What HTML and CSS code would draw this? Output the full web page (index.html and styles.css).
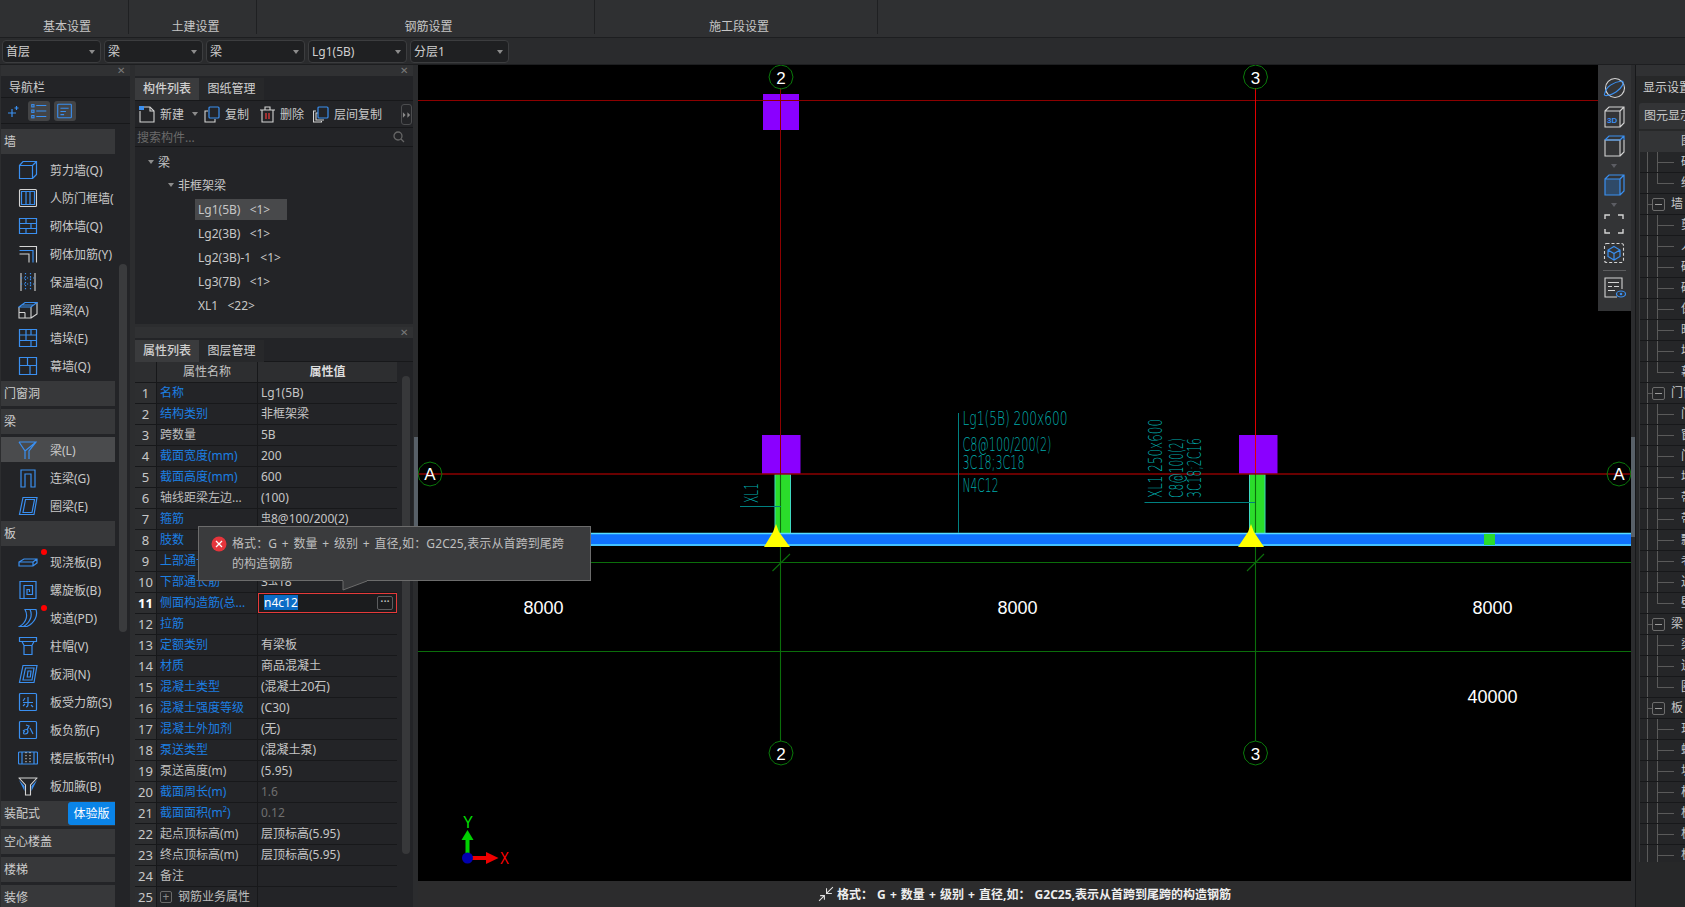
FILE: index.html
```html
<!DOCTYPE html>
<html lang="zh-CN">
<head>
<meta charset="utf-8">
<title>钢筋设置</title>
<link rel="stylesheet" href="styles.css">
</head>
<body>
<div class="app">
  <header class="menu">
    <div class="menu-cell c1"><span>基本设置</span></div>
    <div class="menu-cell c2"><span>土建设置</span></div>
    <div class="menu-cell c3"><span>钢筋设置</span></div>
    <div class="menu-cell c4"><span>施工段设置</span></div>
  </header>
  <div class="selbar">
    <div class="sel">首层</div>
    <div class="sel">梁</div>
    <div class="sel">梁</div>
    <div class="sel">Lg1(5B)</div>
    <div class="sel">分层1</div>
  </div>
  <main class="main">
    <!-- NAV -->
    <aside class="nav">
      <div class="closebar"><span class="x">✕</span></div>
      <div class="nav-title">导航栏</div>
      <div class="nav-tools">
        <svg class="ntool" width="21" height="22" viewBox="0 0 21 22"><path class="ib" d="M5 13h8M9 9v8M11.500 8h4M13.500 6v4"/></svg>
        <span class="ntbtn"><svg width="22" height="20" viewBox="0 0 22 22"><path class="ib" d="M8 5h11M8 11h11M8 17h11"/><rect class="ib" x="3" y="4" width="2.500" height="2.500"/><rect class="ib" x="3" y="10" width="2.500" height="2.500"/><rect class="ib" x="3" y="16" width="2.500" height="2.500"/></svg></span>
        <span class="ntbtn"><svg width="22" height="20" viewBox="0 0 22 22"><rect class="ib" x="3" y="3.500" width="15" height="15" rx="1"/><path class="ib" d="M6 8h9M6 11.500h6M6 15h4"/></svg></span>
      </div>
      <div class="nav-body">
        <div class="nav-list">
          <div class="nh first">墙</div>
          <div class="ni"><svg width="20" height="20" viewBox="0 0 20 20"><path class="ib" d="M1.500 5.500h13v13h-13zM1.500 5.500l3.500-4h13.500v13l-4 4M14.500 5.500l4-4"/></svg><span>剪力墙(Q)</span></div>
          <div class="ni"><svg width="20" height="20" viewBox="0 0 20 20"><rect class="iw" x="1.500" y="1.500" width="17" height="17" rx="1"/><path class="ib" d="M3.500 3.500h13v13h-13zM8 3.500v13M12 3.500v13"/></svg><span>人防门框墙(</span></div>
          <div class="ni"><svg width="20" height="20" viewBox="0 0 20 20"><path class="ib" d="M1.500 2.500h17v15h-17zM1.500 7.500h17M1.500 12.500h17M8 2.500v5M13 7.500v5M8 12.500v5"/></svg><span>砌体墙(Q)</span></div>
          <div class="ni"><svg width="20" height="20" viewBox="0 0 20 20"><path class="iw" d="M1.500 2.500H18.500v16M1.500 10H11v8.500"/><path class="ib" d="M1.500 6.500H15v12"/></svg><span>砌体加筋(Y)</span></div>
          <div class="ni"><svg width="20" height="20" viewBox="0 0 20 20"><path class="iw" d="M3 1v18M17 1v18"/><path class="ib dot" d="M7.500 1v18M12.500 1v18M3 6h14M3 12h14"/></svg><span>保温墙(Q)</span></div>
          <div class="ni"><svg width="20" height="20" viewBox="0 0 20 20"><path class="iw" d="M1 7v11h12V7M13 18l6-4V3M1 12.500h6M7 12.500V18"/><path class="ib" d="M1 7l6-4.500h12L13 7zM1 7h12M4 5h12"/></svg><span>暗梁(A)</span></div>
          <div class="ni"><svg width="20" height="20" viewBox="0 0 20 20"><path class="ib" d="M1.500 1.500h17v17h-17zM1.500 7h17M1.500 12.500h17M8 1.500V7M13 1.500V7M8 7v5.500M13 12.500v6"/></svg><span>墙垛(E)</span></div>
          <div class="ni"><svg width="20" height="20" viewBox="0 0 20 20"><path class="ib" d="M1.500 1.500h17v17h-17zM1.500 9.500h17M9.500 1.500v8M12 9.500v9"/></svg><span>幕墙(Q)</span></div>
          <div class="nh">门窗洞</div>
          <div class="nh">梁</div>
          <div class="ni sel-item"><svg width="20" height="20" viewBox="0 0 20 20"><path class="ib" d="M1 2h17L11 11v8M1 2l6 9v8M18 2L7 11"/></svg><span>梁(L)</span></div>
          <div class="ni"><svg width="20" height="20" viewBox="0 0 20 20"><path class="ib" d="M3 19V2h14v17h-4V6H7v13z"/></svg><span>连梁(G)</span></div>
          <div class="ni"><svg width="20" height="20" viewBox="0 0 20 20"><path class="ib" d="M5 1.500h14L16 18.500H1.500zM7.500 3.500h9L14 16.500H5z"/></svg><span>圈梁(E)</span></div>
          <div class="nh">板</div>
          <div class="ni"><i class="dot-red"></i><svg width="20" height="20" viewBox="0 0 20 20"><path class="ib" d="M1 10l5-3h13v4l-4 3H1zM1 10h14v4M15 10l4-3"/></svg><span>现浇板(B)</span></div>
          <div class="ni"><svg width="20" height="20" viewBox="0 0 20 20"><path class="ib" d="M2 1.500h16v17H2zM6 18V5.500h8.500v9H9v-5h2.500v2.500"/></svg><span>螺旋板(B)</span></div>
          <div class="ni"><i class="dot-red"></i><svg width="20" height="20" viewBox="0 0 20 20"><path class="ib" d="M7 1.500h11c2 6-1 13-9 17H1.500C9 14 10 7 7 1.500zM12 1.500c3 6 0 13-6.500 17"/></svg><span>坡道(PD)</span></div>
          <div class="ni"><svg width="20" height="20" viewBox="0 0 20 20"><path class="ib" d="M1.500 1.500h17v4h-17zM4 5.500l2 4h8l2-4M6 9.500v9h8v-9"/></svg><span>柱帽(V)</span></div>
          <div class="ni"><svg width="20" height="20" viewBox="0 0 20 20"><path class="ib" d="M5 1.500h14L16 18.500H1.500zM7.500 4h8.500L14 16H5zM10 7h3l-.7 6H9.200z"/></svg><span>板洞(N)</span></div>
          <div class="ni"><svg width="20" height="20" viewBox="0 0 20 20"><rect class="ib" x="1.500" y="1.500" width="17" height="17" rx="1"/><path class="ib" d="M5 10.500h10M10 5v7c0 2-1 3-2 3M7 6l-2 3M13 13l2 2M7 12l-2 2"/></svg><span>板受力筋(S)</span></div>
          <div class="ni"><svg width="20" height="20" viewBox="0 0 20 20"><rect class="ib" x="1.500" y="1.500" width="17" height="17" rx="1"/><path class="ib" d="M8 5l3 1-2 4M5 11c2-2 5-2 5 0s-1 3-3 3-2-2 0-3M12 8l3 6"/></svg><span>板负筋(F)</span></div>
          <div class="ni"><svg width="20" height="20" viewBox="0 0 20 20"><rect class="ib" x=".5" y="4" width="19" height="12" rx="1"/><path class="ib" d="M4 4v12M16 4v12"/><path class="iw dot" d="M8 4v12M12 4v12"/></svg><span>楼层板带(H)</span></div>
          <div class="ni"><svg width="20" height="20" viewBox="0 0 20 20"><path class="iw" d="M.5 2h19M1 2l6.500 7v10h5V9L19 2"/><path class="ibf" d="M1 4l5.500 6v5zM19 4l-5.500 6v5z"/></svg><span>板加腋(B)</span></div>
          <div class="nh trial"><span>装配式</span><b class="badge">体验版</b></div>
          <div class="nh">空心楼盖</div>
          <div class="nh">楼梯</div>
          <div class="nh">装修</div>
        </div>
        <div class="nav-track"><div class="nav-thumb"></div></div>
      </div>
    </aside>

    <!-- MIDDLE -->
    <section class="mid">
      <div class="panel top-panel">
        <div class="closebar"><span class="x">✕</span></div>
        <div class="tabs t-list"><span class="tab on">构件列表</span><span class="tab">图纸管理</span></div>
        <div class="tools">
          <span class="tool"><svg width="16" height="17" viewBox="0 0 16 17"><path class="iw" d="M1 5v11h14V5l-4-4H5"/><path class="iw" d="M11 1v4h4"/><rect class="ibf" x="0" y="0" width="5" height="4"/></svg>新建<i class="caret"></i></span>
          <span class="tool t2"><svg width="16" height="17" viewBox="0 0 16 17"><path class="iw" d="M4 5H1v11h10v-3"/><rect class="ib" x="5" y="1" width="10" height="11" rx="1"/></svg>复制</span>
          <span class="tool t3"><svg width="15" height="17" viewBox="0 0 15 17"><path class="iw" d="M0 4h15M5 4V1h5v3M2 4v12h11V4"/><path class="ir" d="M6 7v6M9 7v6"/></svg>删除</span>
          <span class="tool t4"><svg width="16" height="17" viewBox="0 0 16 17"><path class="iw" d="M3 5H.5v11h8v-1M5 7H3v7h8"/><rect class="ib" x="5" y="1" width="10" height="11" rx="1"/></svg>层间复制</span>
          <span class="more"><svg width="10" height="10" viewBox="0 0 10 10"><path class="tri" d="M1 2l3 3-3 3zM6 2l3 3-3 3z"/></svg></span>
        </div>
        <div class="search"><span>搜索构件...</span><svg width="12" height="12" viewBox="0 0 12 12"><circle class="ig" cx="5" cy="5" r="4"/><path class="ig" d="M8 8l3 3"/></svg></div>
        <div class="tree">
          <div class="tn l0"><i class="caret"></i>梁</div>
          <div class="tn l1"><i class="caret"></i>非框架梁</div>
          <div class="tn l2 cur"><span>Lg1(5B)  &lt;1&gt;</span></div>
          <div class="tn l2"><span>Lg2(3B)  &lt;1&gt;</span></div>
          <div class="tn l2"><span>Lg2(3B)-1  &lt;1&gt;</span></div>
          <div class="tn l2"><span>Lg3(7B)  &lt;1&gt;</span></div>
          <div class="tn l2"><span>XL1  &lt;22&gt;</span></div>
        </div>
      </div>
      <div class="panel prop-panel">
        <div class="closebar"><span class="x">✕</span></div>
        <div class="tabs"><span class="tab on">属性列表</span><span class="tab">图层管理</span></div>
        <div class="prop-body">
          <div class="ptable">
            <div class="pr ph"><div class="pn"></div><div class="pk">属性名称</div><div class="pv">属性值</div></div>
            <div class="pr"><div class="pn">1</div><div class="pk blue">名称</div><div class="pv">Lg1(5B)</div></div>
            <div class="pr"><div class="pn">2</div><div class="pk blue">结构类别</div><div class="pv">非框架梁</div></div>
            <div class="pr"><div class="pn">3</div><div class="pk">跨数量</div><div class="pv">5B</div></div>
            <div class="pr"><div class="pn">4</div><div class="pk blue">截面宽度(mm)</div><div class="pv">200</div></div>
            <div class="pr"><div class="pn">5</div><div class="pk blue">截面高度(mm)</div><div class="pv">600</div></div>
            <div class="pr"><div class="pn">6</div><div class="pk">轴线距梁左边...</div><div class="pv">(100)</div></div>
            <div class="pr"><div class="pn">7</div><div class="pk blue">箍筋</div><div class="pv"><span class="rebar">虫</span>8@100/200(2)</div></div>
            <div class="pr"><div class="pn">8</div><div class="pk blue">肢数</div><div class="pv">2</div></div>
            <div class="pr"><div class="pn">9</div><div class="pk blue">上部通长筋</div><div class="pv">3<span class="rebar">虫</span>18</div></div>
            <div class="pr"><div class="pn">10</div><div class="pk blue">下部通长筋</div><div class="pv">3<span class="rebar">虫</span>18</div></div>
            <div class="pr active"><div class="pn">11</div><div class="pk blue">侧面构造筋(总...</div><div class="pv"><span class="seltext">n4c12</span><span class="dots">···</span></div></div>
            <div class="pr"><div class="pn">12</div><div class="pk blue">拉筋</div><div class="pv"></div></div>
            <div class="pr"><div class="pn">13</div><div class="pk blue">定额类别</div><div class="pv">有梁板</div></div>
            <div class="pr"><div class="pn">14</div><div class="pk blue">材质</div><div class="pv">商品混凝土</div></div>
            <div class="pr"><div class="pn">15</div><div class="pk blue">混凝土类型</div><div class="pv">(混凝土20石)</div></div>
            <div class="pr"><div class="pn">16</div><div class="pk blue">混凝土强度等级</div><div class="pv">(C30)</div></div>
            <div class="pr"><div class="pn">17</div><div class="pk blue">混凝土外加剂</div><div class="pv">(无)</div></div>
            <div class="pr"><div class="pn">18</div><div class="pk blue">泵送类型</div><div class="pv">(混凝土泵)</div></div>
            <div class="pr"><div class="pn">19</div><div class="pk">泵送高度(m)</div><div class="pv">(5.95)</div></div>
            <div class="pr"><div class="pn">20</div><div class="pk blue">截面周长(m)</div><div class="pv dim">1.6</div></div>
            <div class="pr"><div class="pn">21</div><div class="pk blue">截面面积(m²)</div><div class="pv dim">0.12</div></div>
            <div class="pr"><div class="pn">22</div><div class="pk">起点顶标高(m)</div><div class="pv">层顶标高(5.95)</div></div>
            <div class="pr"><div class="pn">23</div><div class="pk">终点顶标高(m)</div><div class="pv">层顶标高(5.95)</div></div>
            <div class="pr"><div class="pn">24</div><div class="pk">备注</div><div class="pv"></div></div>
            <div class="pr"><div class="pn">25</div><div class="pk"><span class="plus">+</span>钢筋业务属性</div><div class="pv"></div></div>
          </div>
          <div class="prop-track"><div class="prop-thumb"></div></div>
        </div>
        <div class="tip">
          <svg class="tip-err" width="16" height="16" viewBox="0 0 16 16"><circle class="errbg" cx="8" cy="8" r="7.500"/><path class="errx" d="M5 5l6 6M11 5l-6 6"/></svg>
          <p>格式：G + 数量 + 级别 + 直径,如：G2C25,表示从首跨到尾跨<br>的构造钢筋</p>
          <svg class="tip-tail" width="26" height="11" viewBox="0 0 26 11"><path class="tailf" d="M1 0v10L25 1V0z"/><path class="tails" d="M1 1v9L25 1"/></svg>
        </div>
      </div>
    </section>
    <div class="split"><i></i></div>

    <!-- CANVAS -->
    <section class="canvas-col">
      <div class="canvas">
        <svg class="cad" width="1213" height="816" viewBox="418 65 1213 816">
          <defs>
            <polygon id="bub" points="12,0 10.400,6 6,10.400 0,12 -6,10.400 -10.400,6 -12,0 -10.400,-6 -6,-10.400 0,-12 6,-10.400 10.400,-6"/>
          </defs>
          <path class="gl" d="M418 562.500H1631M418 651.500H1631"/>
          <path class="gl" d="M772.500 571L790 554M1247 571L1264 554"/>
          <!-- columns -->
          <rect class="purple" x="763" y="94" width="36" height="36"/>
          <rect class="purple" x="762" y="435" width="38.500" height="39"/>
          <rect class="purple" x="1239" y="435" width="38.500" height="39"/>
          <rect class="green" x="775" y="474.500" width="15.500" height="60"/>
          <rect class="green" x="1249.500" y="474.500" width="15.500" height="60"/>
          <!-- axes -->
          <path class="gl" d="M780.500 474V741M1255.500 474V741"/>
          <path class="rl" d="M418 100.500H1631M780.500 88V474"/>
          <path class="rb" d="M1255.500 88V474"/>
          <path class="rl2" d="M418 474H1631"/>
          <!-- beam -->
          <rect class="beam" x="500" y="533" width="1131" height="13"/>
          <path class="beamb" d="M500 533.500H1631M500 545H1631"/>
          <rect class="green0" x="1484" y="534" width="11" height="11"/>
          <polygon class="yellow" points="776,524 779,532 790,547 764,547 773,532"/>
          <polygon class="yellow" points="1251,524 1254,532 1264,547 1238,547 1248,532"/>
          <!-- bubbles -->
          <use class="bubble" href="#bub" x="781" y="77"/>
          <use class="bubble" href="#bub" x="1255.500" y="77"/>
          <use class="bubble" href="#bub" x="781" y="753"/>
          <use class="bubble" href="#bub" x="1255.500" y="753"/>
          <use class="bubble" href="#bub" x="430" y="474"/>
          <use class="bubble" href="#bub" x="1619" y="474"/>
          <text class="ct" x="781" y="83.500">2</text>
          <text class="ct" x="1255.500" y="83.500">3</text>
          <text class="ct" x="781" y="759.500">2</text>
          <text class="ct" x="1255.500" y="759.500">3</text>
          <text class="ct" x="430" y="480">A</text>
          <text class="ct" x="1619" y="480">A</text>
          <!-- dimension text -->
          <text class="dim-t" x="543.500" y="614">8000</text>
          <text class="dim-t" x="1017.500" y="614">8000</text>
          <text class="dim-t" x="1492.500" y="614">8000</text>
          <text class="dim-t" x="1492.500" y="702.500">40000</text>
          <!-- annotations -->
          <path class="an" d="M958.500 413V533M740 506.500H781M1144.500 502.500H1255"/>
          <text class="cad-t" x="962.500" y="425" textLength="105" lengthAdjust="spacingAndGlyphs">Lg1(5B) 200x600</text>
          <text class="cad-t" x="962.500" y="451" textLength="89" lengthAdjust="spacingAndGlyphs">C8@100/200(2)</text>
          <text class="cad-t" x="962.500" y="469" textLength="62" lengthAdjust="spacingAndGlyphs">3C18;3C18</text>
          <text class="cad-t" x="962.500" y="492" textLength="36" lengthAdjust="spacingAndGlyphs">N4C12</text>
          <text class="cad-t" transform="translate(758 503) rotate(-90)" textLength="20" lengthAdjust="spacingAndGlyphs">XL1</text>
          <text class="cad-t" transform="translate(1162 498) rotate(-90)" textLength="79" lengthAdjust="spacingAndGlyphs">XL1 250x600</text>
          <text class="cad-t" transform="translate(1183 498) rotate(-90)" textLength="60" lengthAdjust="spacingAndGlyphs">C8@100(2)</text>
          <text class="cad-t" transform="translate(1201 498) rotate(-90)" textLength="60" lengthAdjust="spacingAndGlyphs">3C18;2C16</text>
          <!-- ucs -->
          <path class="ucsg" d="M467.500 858V838"/>
          <polygon class="ucsgf" points="467.500,830 473.500,840 461.500,840"/>
          <path class="ucsr" d="M470 858H488"/>
          <polygon class="ucsrf" points="498.500,858 486,852 486,864"/>
          <ellipse class="ucsb" cx="467.500" cy="858" rx="5.500" ry="5.500"/>
          <text class="cad-y" x="468" y="828" textLength="10" lengthAdjust="spacingAndGlyphs">Y</text>
          <text class="cad-x" x="500" y="864" textLength="9" lengthAdjust="spacingAndGlyphs">X</text>
        </svg>
        <div class="vbar">
          <svg width="24" height="24" viewBox="0 0 24 24"><ellipse class="iw" cx="13" cy="12" rx="9.500" ry="9.500"/><path class="ib" d="M3 17c-3 4 5 3 11-1s9-10 6-11"/><path class="ib" d="M3 17c1-6 8-11 17-12"/></svg>
          <svg width="24" height="24" viewBox="0 0 24 24"><path class="iw" d="M3 6h15v16H3zM3 6l4-4h15v16l-4 4M18 6l4-4"/><text class="t3d" x="5" y="18">3D</text></svg>
          <svg width="24" height="24" viewBox="0 0 24 24"><path class="iw" d="M3 6h15v16H3zM18 22l4-4V6"/><path class="ib" d="M3 6l4-4h15v4M3 6h15M18 6l4-4"/></svg>
          <i class="vtri"></i>
          <svg width="24" height="24" viewBox="0 0 24 24"><path class="ibs" d="M3 6h15v16H3z"/><path class="ib" d="M3 6h15v16H3zM3 6l4-4h15v16l-4 4M18 6l4-4"/></svg>
          <i class="vtri"></i>
          <svg width="24" height="24" viewBox="0 0 24 24"><path class="iw2" d="M3 7V3h5M16 3h5v4M21 17v4h-5M8 21H3v-4"/></svg>
          <svg width="24" height="24" viewBox="0 0 24 24"><rect class="iw dash" x="2.500" y="2.500" width="19" height="19" rx="2"/><path class="ib" d="M12 5.500l6 3.500v6.500l-6 3.500-6-3.500V9zM6 9l6 3.500L18 9M12 12.500V19"/></svg>
          <i class="vline"></i>
          <svg width="24" height="24" viewBox="0 0 24 24"><path class="iw" d="M20 14V3H3v19h12M6 7.500h11M6 11.500h4M12 11.500h5M6 15.500h7"/><ellipse class="ib" cx="19" cy="19" rx="4.500" ry="3"/><circle class="ibf" cx="19" cy="19" r="1.300"/></svg>
        </div>
      </div>
      <footer class="status">
        <svg width="16" height="16" viewBox="0 0 15 15"><path class="iw1" d="M14 1L8 7M8 2v5h5M1 14l5-5M6 13V9H2"/></svg>
        <span>格式： G + 数量 + 级别 + 直径,如： G2C25,表示从首跨到尾跨的构造钢筋</span>
      </footer>
    </section>
    <div class="split right"><i></i></div>

    <!-- RIGHT -->
    <aside class="rpanel">
      <div class="closebar"></div>
      <div class="r-title">显示设置</div>
      <div class="r-tab">图元显示</div>
      <div class="rtable">
        <div class="rh">图层构件</div>
        <div class="rr c">砼结构</div><div class="rr c last">结构</div>
        <div class="rr g"><i class="minus"></i>墙</div>
        <div class="rr c">剪力墙</div><div class="rr c">人防门框墙</div><div class="rr c">砌体墙</div><div class="rr c">砌体加筋</div><div class="rr c">保温墙</div><div class="rr c">暗梁</div><div class="rr c">墙垛</div><div class="rr c last">幕墙</div>
        <div class="rr g"><i class="minus"></i>门窗洞</div>
        <div class="rr c">门</div><div class="rr c">窗</div><div class="rr c">门联窗</div><div class="rr c">墙洞</div><div class="rr c">带形窗</div><div class="rr c">带形洞</div><div class="rr c">飘窗</div><div class="rr c">老虎窗</div><div class="rr c">过梁</div><div class="rr c last">壁龛</div>
        <div class="rr g"><i class="minus"></i>梁</div>
        <div class="rr c">梁</div><div class="rr c">连梁</div><div class="rr c last">圈梁</div>
        <div class="rr g"><i class="minus"></i>板</div>
        <div class="rr c">现浇板</div><div class="rr c">螺旋板</div><div class="rr c">坡道</div><div class="rr c">柱帽</div><div class="rr c">板洞</div><div class="rr c">板受力筋</div><div class="rr c">板负筋</div>
      </div>
    </aside>
  </main>
</div>
</body>
</html>
```

FILE: styles.css
```css
* { box-sizing: border-box; }
html, body { margin: 0; height: 100%; overflow: hidden; background: #2a2b2d; }
body {
  font-family: "Noto Sans", "Noto Sans CJK SC", sans-serif;
  font-size: 12px;
  color: #c9c9c9;
}
.app { width: 1685px; height: 907px; display: flex; flex-direction: column; }

/* menu */
.menu { height: 38px; display: flex; background: #2f3032; border-bottom: 1px solid #1d1e20; }
.menu-cell {
  height: 34px; display: flex; align-items: flex-end; justify-content: center;
  padding: 0 0 0 6px; line-height: 18px; border-right: 1px solid #1f2022; color: #c6c6c6;
}
.menu-cell span { margin-bottom: -2px; }
.c1 { width: 129px; } .c2 { width: 128px; } .c3 { width: 338px; } .c4 { width: 283px; }

.selbar { height: 27px; display: flex; gap: 3px; padding: 2px 0 0 2px; background: #2a2b2d; border-bottom: 1px solid #1d1e20; }
.sel {
  width: 99px; height: 23px; line-height: 21px; padding-left: 3px; position: relative;
  background: #1f2022; border: 1px solid #3c3d3f; border-radius: 4px; color: #cfcfcf;
}
.sel::after {
  content: ""; position: absolute; right: 5px; top: 9px;
  border: 3px solid transparent; border-top: 4px solid #8c8c8c; border-bottom: 0;
}

.main { flex: 1; display: flex; min-height: 0; background: #2c2d2f; }
.closebar { height: 11px; background: #303133; position: relative; flex: none; }
.x { position: absolute; right: 5px; top: -1px; font-size: 10px; line-height: 13px; color: #7a7a7a; }

/* nav */
.nav { width: 129px; margin-left: 1px; background: #232427; flex: none; display: flex; flex-direction: column; }
.nav-title { height: 22px; line-height: 24px; padding-left: 8px; border-bottom: 1px solid #17181a; color: #cfcfcf; }
.nav-tools { height: 26px; display: flex; align-items: center; gap: 4px; padding-left: 2px; border-bottom: 1px solid #17181a; }
.ntbtn { width: 22px; height: 20px; background: #434446; border-radius: 3px; display: flex; align-items: center; justify-content: center; }
.nav-body { flex: 1; display: flex; min-height: 0; overflow: hidden; padding-top: 4px; }
.nav-list { width: 114px; flex: none; display: flex; flex-direction: column; }
.nh { height: 25px; line-height: 25px; padding-left: 3px; background: #37383a; margin: 1px 0 2px; white-space: nowrap; color: #cdcdcd; flex: none; }
.ni { height: 28px; flex: none; display: flex; align-items: center; padding-left: 17px; position: relative; white-space: nowrap; overflow: hidden; }
.ni span { margin-left: 12px; }
.ni.sel-item { height: 25px; margin: 1px 0 2px; background: #4a4b4d; }
.trial { display: flex; justify-content: space-between; overflow: hidden; }
.badge { width: 47px; background: #0a84e8; color: #fff; font-weight: 400; text-align: center; border-radius: 3px 0 0 3px; margin-top: 1px; height: 23px; line-height: 23px; }
.dot-red { position: absolute; left: 40px; top: 1px; width: 6px; height: 6px; border-radius: 50%; background: #f00; }
.nav-track { flex: 1; padding: 136px 3px 0 4px; }
.nav-thumb { width: 8px; height: 368px; background: #3a3b3d; border-radius: 4px; }

/* icon strokes */
.ib { stroke: #3a8ff0; stroke-width: 1.2; fill: none; }
.iw { stroke: #d4d4d4; stroke-width: 1.1; fill: none; }
.iw1 { stroke: #e0e0e0; stroke-width: 1; fill: none; }
.iw2 { stroke: #d4d4d4; stroke-width: 1.4; fill: none; }
.ir { stroke: #e23b3b; stroke-width: 1.3; fill: none; }
.ig { stroke: #666; stroke-width: 1.3; fill: none; }
.ibf { fill: #3a8ff0; }
.ibs { fill: #2f4a68; }
.tri { fill: #8a8a8a; }
.dot { stroke-dasharray: 1.2 1.8; }
.dash { stroke-dasharray: 3 2; }
.t3d { font-family: "Liberation Sans", sans-serif; font-size: 8px; font-weight: 700; fill: #3a8ff0; }

/* mid */
.mid { width: 278px; margin-left: 5px; flex: none; display: flex; flex-direction: column; gap: 3px; position: relative; }
.panel { background: #232427; display: flex; flex-direction: column; }
.top-panel { height: 259px; }
.prop-panel { flex: 1; min-height: 0; }
.tabs { height: 24px; padding-top: 2px; display: flex; flex: none; border-bottom: 1px solid #17181a; }
.t-list { height: 25px; }
.tab { width: 65px; line-height: 22px; height: 22px; text-align: center; background: #27282a; color: #d0d0d0; }
.tab.on { width: 64px; background: #3a3b3d; font-weight: 500; }
.tools { height: 27px; display: flex; align-items: center; padding-left: 4px; border-bottom: 1px solid #17181a; flex: none; position: relative; }
.tool { display: flex; align-items: center; gap: 5px; white-space: nowrap; }
.tool .caret { margin-left: 3px; }
.t2 { margin-left: 6px; } .t3 { margin-left: 11px; } .t4 { margin-left: 9px; }
.caret { display: inline-block; border: 3.500px solid transparent; border-top: 4px solid #8c8c8c; border-bottom: 0; }
.more { position: absolute; left: 266px; top: 3px; width: 11px; height: 21px; border: 1px solid #4c4d4f; border-radius: 3px; display: flex; align-items: center; justify-content: center; overflow: hidden; }
.search { height: 19px; padding: 0 8px 0 2px; display: flex; align-items: center; justify-content: space-between; color: #6a6a6a; border-bottom: 1px solid #17181a; flex: none; }
.tree { padding-top: 2px; }
.tn { height: 24px; display: flex; align-items: center; white-space: pre; color: #c6c6c6; word-spacing: 1.5px; }
.tn .caret { margin-right: 4px; }
.tn.l0 { padding-left: 13px; height: 23px; margin-top: 1px; }
.l1 { padding-left: 33px; } .l2 { padding-left: 60px; }
.l2 span { padding-left: 3px; line-height: 21px; height: 21px; width: 92px; display: block; }
.cur span { background: #48494b; }

.prop-body { flex: 1; display: flex; min-height: 0; overflow: hidden; }
.ptable { width: 262px; flex: none; }
.pr { height: 21px; display: flex; line-height: 20px; border-bottom: 1px solid #17181a; white-space: nowrap; }
.pn { width: 22px; text-align: center; background: #2d2e30; border-right: 1px solid #17181a; font-size: 13px; color: #c8c8c8; flex: none; }
.pk { width: 101px; padding-left: 3px; border-right: 1px solid #17181a; flex: none; overflow: hidden; color: #bdbdbd; }
.pk.blue { color: #1c7fe2; }
.pv { flex: 1; padding-left: 3px; color: #c6c6c6; position: relative; }
.pv.dim { color: #6f6f6f; }
.ph { background: #2d2e30; }
.ph .pk { text-align: center; padding: 0; color: #c4c4c4; }
.ph .pv { text-align: center; padding: 0; font-weight: 700; color: #dcdcdc; }
.rebar { font-size: 10px; position: relative; top: -2px; display: inline-block; width: 10px; text-align: center; }
.active .pn { font-weight: 700; color: #fff; }
.active .pv { background: #1b1c1e; outline: 1px solid #e53a3a; outline-offset: -1px; padding-left: 6px; }
.seltext { background: #0c6cc6; color: #fff; display: inline-block; line-height: 15px; height: 15px; }
.dots { position: absolute; right: 4px; top: 3px; width: 16px; height: 14px; line-height: 10px; border: 1px solid #5c5d5f; border-radius: 2px; text-align: center; font-size: 12px; color: #c8c8c8; }
.plus { display: inline-block; width: 12px; height: 12px; line-height: 10px; border: 1px solid #6a6a6a; border-radius: 2px; text-align: center; margin-right: 6px; color: #888; }
.prop-track { flex: 1; padding: 14px 5px 0 5px; }
.prop-thumb { width: 8px; height: 478px; background: #37383a; border-radius: 4px; }

.tip {
  position: absolute; left: 63px; top: 461px; width: 393px; height: 55px; z-index: 5;
  background: #3a3b3d; border: 1px solid #6c6c6c; color: #bfbfbf;
}
.tip p { margin: 0; position: absolute; left: 33px; top: 7px; line-height: 20px; white-space: nowrap; letter-spacing: .12px; word-spacing: 1.4px; }
.tip-err { position: absolute; left: 12px; top: 9px; }
.errbg { fill: #e5353c; }
.errx { stroke: #fff; stroke-width: 1.3; fill: none; }
.tip-tail { position: absolute; left: 143px; top: 53px; }
.tailf { fill: #3a3b3d; }
.tails { stroke: #6c6c6c; fill: none; }

.split { width: 5px; flex: none; background: #2b2c2e; position: relative; }
.split i { position: absolute; left: 1px; top: 372px; width: 4px; height: 100px; background: #586068; }
.split.right { width: 4px; }
.split.right i { left: 0; }

/* canvas */
.canvas-col { width: 1213px; flex: none; display: flex; flex-direction: column; }
.canvas { height: 816px; background: #000; position: relative; flex: none; }
.cad { display: block; }
.gl { stroke: #0b6e0b; stroke-width: 1.1; fill: none; }
.rl { stroke: #8c0000; stroke-width: 1; fill: none; }
.rl2 { stroke: #8c0000; stroke-width: 1.6; fill: none; }
.rb { stroke: #e00000; stroke-width: 1; fill: none; }
.purple { fill: #8a00ff; }
.green { fill: #2bdc2b; stroke: #3fd8c0; stroke-width: 1; }
.green0 { fill: #2bdc2b; }
.beam { fill: #0f72ff; }
.beamb { stroke: #55ddff; stroke-width: 1.5; fill: none; }
.yellow { fill: #ffff00; }
.bubble { fill: none; stroke: #0a7a0a; stroke-width: 1; }
.ct { fill: #fff; font-family: "Liberation Sans", sans-serif; font-size: 17px; text-anchor: middle; }
.dim-t { fill: #fff; font-family: "Liberation Sans", sans-serif; font-size: 18px; text-anchor: middle; }
.an { stroke: #008080; stroke-width: 1; fill: none; }
.cad-t { fill: #00aaaa; font-family: "DejaVu Sans", sans-serif; font-weight: 200; font-size: 20px; }
.cad-y { fill: #00e000; font-family: "Liberation Sans", sans-serif; font-size: 16px; text-anchor: middle; }
.cad-x { fill: #ff0000; font-family: "Liberation Sans", sans-serif; font-size: 16px; }
.ucsg { stroke: #00d000; stroke-width: 4; }
.ucsgf { fill: #00d000; }
.ucsr { stroke: #f00000; stroke-width: 4; }
.ucsrf { fill: #f00000; }
.ucsb { fill: #0000b0; }

.vbar {
  position: absolute; right: 0; top: 0; width: 33px; height: 246px; background: #333436;
  display: flex; flex-direction: column; align-items: center; padding: 11px 1px 0 0;
}
.vbar svg { flex: none; margin-bottom: 5px; }
.vtri { flex: none; margin: 1px 0 5px; border: 3px solid transparent; border-top: 4px solid #5c5d63; border-bottom: 0; }
.vline { flex: none; width: 23px; height: 1px; background: #5c5d5f; margin: 0 0 4px; }

.status {
  height: 26px; background: #2c2c2d; display: flex; align-items: center; justify-content: center;
  gap: 3px; padding-left: 0; color: #eee; font-weight: 700; white-space: nowrap; word-spacing: 1px;
}

/* right */
.rpanel { flex: 1; min-width: 0; overflow: hidden; background: #272829; display: flex; flex-direction: column; border-left: 1px solid #17181a; }
.r-title { height: 22px; line-height: 24px; padding-left: 7px; white-space: nowrap; color: #d0d0d0; }
.r-tab { height: 26px; margin: 5px 0 0 3px; line-height: 25px; padding-left: 5px; background: #333436; border-radius: 3px 0 0 0; white-space: nowrap; color: #c8c8c8; }
.rtable { width: 60px; height: 731px; margin: 2px 0 0 3px; overflow: hidden; border-left: 1px solid #3a3b3d; flex: none; background: #252628; }
.rh { height: 21px; background: #333436; padding-left: 41px; line-height: 20px; white-space: nowrap; overflow: hidden; }
.rr { height: 21px; line-height: 20px; white-space: nowrap; position: relative; border-bottom: 1px solid #17181a;
  background-repeat: no-repeat; color: #c8c8c8; }
.rr.c {
  padding-left: 41px;
  background-image: linear-gradient(#5a5a5a, #5a5a5a), linear-gradient(#5a5a5a, #5a5a5a), linear-gradient(#5a5a5a, #5a5a5a);
  background-size: 1px 100%, 1px 100%, 17px 1px;
  background-position: 7px 0, 17px 0, 17px 10px;
}
.rr.c.last { background-size: 1px 100%, 1px 11px, 17px 1px; }
.rr.g {
  padding-left: 31px;
  background-image: linear-gradient(#5a5a5a, #5a5a5a), linear-gradient(#5a5a5a, #5a5a5a);
  background-size: 1px 100%, 5px 1px;
  background-position: 7px 0, 7px 10px;
}
.minus { position: absolute; left: 12px; top: 4px; width: 13px; height: 13px; border: 1px solid #6c6c6c; border-radius: 2px; }
.minus::after { content: ""; position: absolute; left: 2px; top: 5px; width: 7px; height: 1px; background: #9a9a9a; }
```
